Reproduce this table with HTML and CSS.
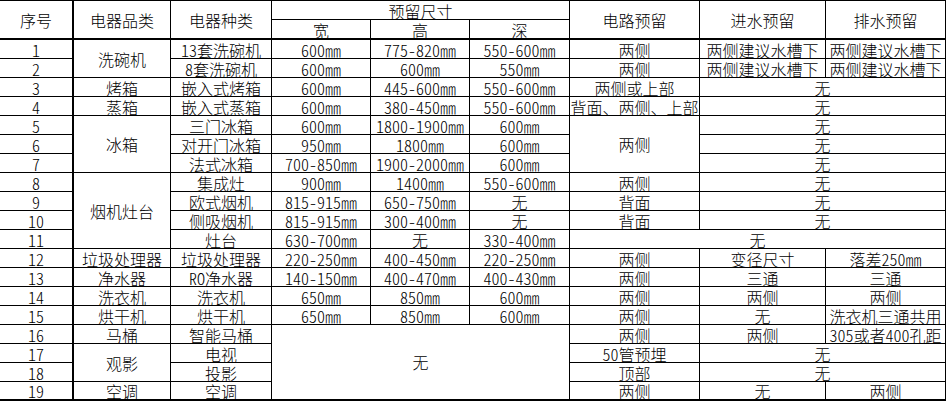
FILE: index.html
```html
<!DOCTYPE html>
<html lang="zh-CN">
<head>
<meta charset="utf-8">
<title>电器预留尺寸</title>
<link rel="stylesheet" href="styles.css">
</head>
<body>
<div class="sheet">
  <div class="cell num r2 mid hb">序号</div>
  <div class="cell r2 mid hb">电器品类</div>
  <div class="cell r2 mid hb">电器种类</div>
  <div class="cell c3">预留尺寸</div>
  <div class="cell r2 mid hb">电路预留</div>
  <div class="cell r2 mid hb">进水预留</div>
  <div class="cell r2 mid hb">排水预留</div>
  <div class="cell hb">宽</div>
  <div class="cell hb">高</div>
  <div class="cell hb">深</div>

  <div class="cell num">1</div>
  <div class="cell r2 mid">洗碗机</div>
  <div class="cell">13套洗碗机</div>
  <div class="cell">600㎜</div>
  <div class="cell">775-820㎜</div>
  <div class="cell">550-600㎜</div>
  <div class="cell">两侧</div>
  <div class="cell">两侧建议水槽下</div>
  <div class="cell">两侧建议水槽下</div>

  <div class="cell num">2</div>
  <div class="cell">8套洗碗机</div>
  <div class="cell">600㎜</div>
  <div class="cell">600㎜</div>
  <div class="cell">550㎜</div>
  <div class="cell">两侧</div>
  <div class="cell">两侧建议水槽下</div>
  <div class="cell">两侧建议水槽下</div>

  <div class="cell num">3</div>
  <div class="cell">烤箱</div>
  <div class="cell">嵌入式烤箱</div>
  <div class="cell">600㎜</div>
  <div class="cell">445-600㎜</div>
  <div class="cell">550-600㎜</div>
  <div class="cell">两侧或上部</div>
  <div class="cell c2">无</div>

  <div class="cell num">4</div>
  <div class="cell">蒸箱</div>
  <div class="cell">嵌入式蒸箱</div>
  <div class="cell">600㎜</div>
  <div class="cell">380-450㎜</div>
  <div class="cell">550-600㎜</div>
  <div class="cell">背面、两侧、上部</div>
  <div class="cell c2">无</div>

  <div class="cell num">5</div>
  <div class="cell r3 mid">冰箱</div>
  <div class="cell">三门冰箱</div>
  <div class="cell">600㎜</div>
  <div class="cell">1800-1900㎜</div>
  <div class="cell">600㎜</div>
  <div class="cell r3 mid">两侧</div>
  <div class="cell c2">无</div>

  <div class="cell num">6</div>
  <div class="cell">对开门冰箱</div>
  <div class="cell">950㎜</div>
  <div class="cell">1800㎜</div>
  <div class="cell">600㎜</div>
  <div class="cell c2">无</div>

  <div class="cell num">7</div>
  <div class="cell">法式冰箱</div>
  <div class="cell">700-850㎜</div>
  <div class="cell">1900-2000㎜</div>
  <div class="cell">600㎜</div>
  <div class="cell c2">无</div>

  <div class="cell num">8</div>
  <div class="cell r4 mid">烟机灶台</div>
  <div class="cell">集成灶</div>
  <div class="cell">900㎜</div>
  <div class="cell">1400㎜</div>
  <div class="cell">550-600㎜</div>
  <div class="cell">两侧</div>
  <div class="cell c2">无</div>

  <div class="cell num">9</div>
  <div class="cell">欧式烟机</div>
  <div class="cell">815-915㎜</div>
  <div class="cell">650-750㎜</div>
  <div class="cell">无</div>
  <div class="cell">背面</div>
  <div class="cell c2">无</div>

  <div class="cell num">10</div>
  <div class="cell">侧吸烟机</div>
  <div class="cell">815-915㎜</div>
  <div class="cell">300-400㎜</div>
  <div class="cell">无</div>
  <div class="cell">背面</div>
  <div class="cell c2">无</div>

  <div class="cell num">11</div>
  <div class="cell">灶台</div>
  <div class="cell">630-700㎜</div>
  <div class="cell">无</div>
  <div class="cell">330-400㎜</div>
  <div class="cell c3">无</div>

  <div class="cell num">12</div>
  <div class="cell">垃圾处理器</div>
  <div class="cell">垃圾处理器</div>
  <div class="cell">220-250㎜</div>
  <div class="cell">400-450㎜</div>
  <div class="cell">220-250㎜</div>
  <div class="cell">两侧</div>
  <div class="cell">变径尺寸</div>
  <div class="cell">落差250㎜</div>

  <div class="cell num">13</div>
  <div class="cell">净水器</div>
  <div class="cell">RO净水器</div>
  <div class="cell">140-150㎜</div>
  <div class="cell">400-470㎜</div>
  <div class="cell">400-430㎜</div>
  <div class="cell">两侧</div>
  <div class="cell">三通</div>
  <div class="cell">三通</div>

  <div class="cell num">14</div>
  <div class="cell">洗衣机</div>
  <div class="cell">洗衣机</div>
  <div class="cell">650㎜</div>
  <div class="cell">850㎜</div>
  <div class="cell">600㎜</div>
  <div class="cell">两侧</div>
  <div class="cell">两侧</div>
  <div class="cell">两侧</div>

  <div class="cell num">15</div>
  <div class="cell">烘干机</div>
  <div class="cell">烘干机</div>
  <div class="cell">650㎜</div>
  <div class="cell">850㎜</div>
  <div class="cell">600㎜</div>
  <div class="cell">两侧</div>
  <div class="cell">无</div>
  <div class="cell">洗衣机三通共用</div>

  <div class="cell num">16</div>
  <div class="cell">马桶</div>
  <div class="cell">智能马桶</div>
  <div class="cell c3 r4 mid lb">无</div>
  <div class="cell">两侧</div>
  <div class="cell">两侧</div>
  <div class="cell">305或者400孔距</div>

  <div class="cell num">17</div>
  <div class="cell r2 mid">观影</div>
  <div class="cell">电视</div>
  <div class="cell">50管预埋</div>
  <div class="cell c2">无</div>

  <div class="cell num">18</div>
  <div class="cell">投影</div>
  <div class="cell">顶部</div>
  <div class="cell c2">无</div>

  <div class="cell num lb">19</div>
  <div class="cell lb">空调</div>
  <div class="cell lb">空调</div>
  <div class="cell lb">两侧</div>
  <div class="cell lb">无</div>
  <div class="cell lb">两侧</div>
</div>
</body>
</html>
```

FILE: styles.css
```css
html, body {
  margin: 0;
  padding: 0;
  background: #ffffff;
}

body {
  font-family: "Noto Sans CJK SC", "Noto Sans Mono CJK SC", sans-serif;
  font-size: 16px;
  font-weight: 300;
  color: #000000;
  font-feature-settings: "hwid" 1;
}

.sheet {
  display: grid;
  grid-template-columns: 74px 97px 101px 99px 99px 100px 130px 126px 120px;
  grid-template-rows: 19px 20px repeat(19, 19px);
  width: 946px;
  border-top: 1px solid #000000;
}

.cell {
  box-sizing: border-box;
  border-right: 1px solid #000000;
  border-bottom: 1px solid #000000;
  display: flex;
  align-items: flex-end;
  justify-content: center;
  line-height: 16px;
  white-space: nowrap;
  min-width: 0;
}

.num {
  border-right-width: 2px;
}

.mid {
  align-items: center;
}

.c2 {
  grid-column: span 2;
}

.c3 {
  grid-column: span 3;
}

.r2 {
  grid-row: span 2;
}

.r3 {
  grid-row: span 3;
}

.r4 {
  grid-row: span 4;
}

.hb,
.lb {
  border-bottom-width: 2px;
}
```
